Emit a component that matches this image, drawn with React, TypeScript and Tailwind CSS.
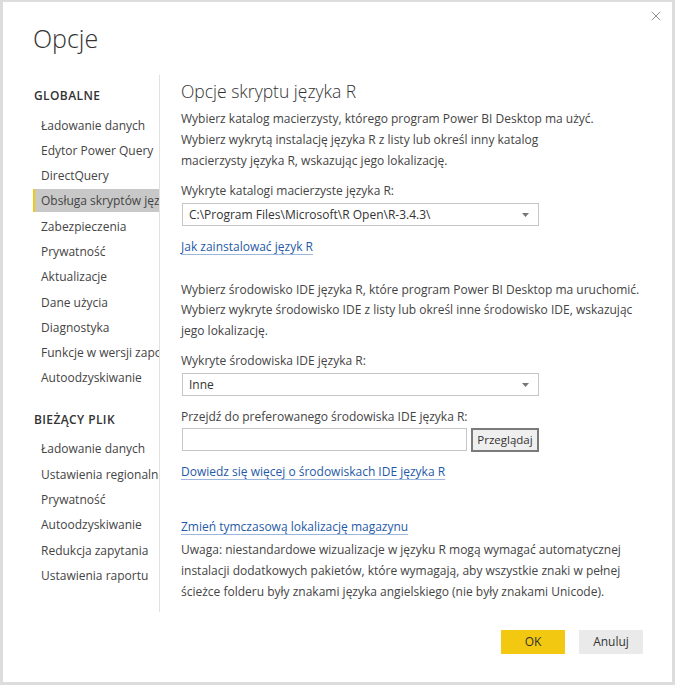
import { X } from 'lucide-react';

const font = { fontFamily: '"Open Sans", "Noto Sans", sans-serif' };

const globalItems = [
  'Ładowanie danych',
  'Edytor Power Query',
  'DirectQuery',
  'Obsługa skryptów języka R',
  'Zabezpieczenia',
  'Prywatność',
  'Aktualizacje',
  'Dane użycia',
  'Diagnostyka',
  'Funkcje w wersji zapoznawczej',
  'Autoodzyskiwanie',
];

const fileItems = [
  'Ładowanie danych',
  'Ustawienia regionalne',
  'Prywatność',
  'Autoodzyskiwanie',
  'Redukcja zapytania',
  'Ustawienia raportu',
];

function NavItem({ label, active }: { label: string; active?: boolean }) {
  return (
    <div
      className={
        active
          ? 'h-[23px] overflow-hidden whitespace-nowrap border-l-2 border-[#f2c811] bg-[#c8c8c8] pl-[6px] leading-[23px] text-[#444]'
          : 'h-[23px] overflow-hidden whitespace-nowrap pl-[8px] leading-[23px] text-[#444]'
      }
    >
      {label}
    </div>
  );
}

function Select({ value }: { value: string }) {
  return (
    <div className="flex h-[23px] w-[357px] items-center justify-between border border-[#c6c6c6] bg-white pl-[6px] pr-[9px] text-[#333]">
      <span>{value}</span>
      <svg width="7" height="4" viewBox="0 0 7 4">
        <path d="M0 0h7L3.5 4z" fill="#777" />
      </svg>
    </div>
  );
}

function Link({ children }: { children: string }) {
  return (
    <div className="leading-[21px]">
      <span className="text-[#1f5aa6] underline decoration-[#9db7dc] underline-offset-[3px]">{children}</span>
    </div>
  );
}

export default function App() {
  return (
    <div className="h-[685px] w-[675px] bg-[#dcdcdc] p-[3px] pt-[2px]" style={font}>
      <div className="relative flex h-[680px] w-[669px] flex-col bg-white text-[12px]">
        <button className="absolute right-[8px] top-[6px] text-[#777]">
          <X size={16} strokeWidth={1.2} />
        </button>

        <h1 className="ml-[30px] mt-[18px] text-[25px] font-light leading-[36px] text-[#333]">Opcje</h1>

        <div className="ml-[30px] mt-[19px] flex h-[537px]">
          <nav className="w-[127px] shrink-0 border-r border-[#e1e1e1]">
            <div className="mt-[11px] pl-[1px] text-[12px] font-semibold leading-[20px] tracking-[0.4px] text-[#333]">GLOBALNE</div>
            <div className="mt-[7.5px] flex flex-col gap-[2.3px]">
              {globalItems.map((item) => (
                <NavItem key={item} label={item} active={item === 'Obsługa skryptów języka R'} />
              ))}
            </div>
            <div className="mt-[20.5px] pl-[1px] text-[12px] font-semibold leading-[20px] tracking-[0.4px] text-[#333]">BIEŻĄCY PLIK</div>
            <div className="mt-[7.5px] flex flex-col gap-[2.3px]">
              {fileItems.map((item) => (
                <NavItem key={item} label={item} />
              ))}
            </div>
          </nav>

          <section className="flex-1 whitespace-nowrap pl-[21px] pt-[3px] text-[#444]">
            <h2 className="text-[17.5px] font-light leading-[26px] text-[#333]">Opcje skryptu języka R</h2>
            <p className="mt-[3.5px] leading-[21px]">
              Wybierz katalog macierzysty, którego program Power BI Desktop ma użyć.
              <br />
              Wybierz wykrytą instalację języka R z listy lub określ inny katalog
              <br />
              macierzysty języka R, wskazując jego lokalizację.
            </p>

            <div className="mt-[9px] leading-[21px]">Wykryte katalogi macierzyste języka R:</div>
            <div className="mt-[2.5px] ml-px">
              <Select value="C:\Program Files\Microsoft\R Open\R-3.4.3\" />
            </div>
            <div className="mt-[9.5px]">
              <Link>Jak zainstalować język R</Link>
            </div>

            <p className="mt-[23px] leading-[20.5px]">
              Wybierz środowisko IDE języka R, które program Power BI Desktop ma uruchomić.
              <br />
              Wybierz wykryte środowisko IDE z listy lub określ inne środowisko IDE, wskazując
              <br />
              jego lokalizację.
            </p>

            <div className="mt-[9px] leading-[21px]">Wykryte środowiska IDE języka R:</div>
            <div className="mt-[2px] ml-px">
              <Select value="Inne" />
            </div>

            <div className="mt-[9.5px] leading-[21px]">Przejdź do preferowanego środowiska IDE języka R:</div>
            <div className="mt-[1.5px] ml-px flex gap-[4px]">
              <div className="h-[23px] w-[285px] border border-[#c6c6c6] bg-white" />
              <button className="h-[24px] w-[68px] border-2 border-[#7a7a7a] bg-[#efefef] text-[11.5px] text-[#333]">Przeglądaj</button>
            </div>
            <div className="mt-[8.5px]">
              <Link>Dowiedz się więcej o środowiskach IDE języka R</Link>
            </div>

            <div className="mt-[34px]">
              <Link>Zmień tymczasową lokalizację magazynu</Link>
            </div>
            <p className="mt-[2px] leading-[21px]">
              Uwaga: niestandardowe wizualizacje w języku R mogą wymagać automatycznej
              <br />
              instalacji dodatkowych pakietów, które wymagają, aby wszystkie znaki w pełnej
              <br />
              ścieżce folderu były znakami języka angielskiego (nie były znakami Unicode).
            </p>
          </section>
        </div>

        <div className="mr-[29px] mt-[18px] flex justify-end gap-[14px]">
          <button className="h-[24px] w-[64px] bg-[#f2c811] text-[12px] text-[#333]">OK</button>
          <button className="h-[24px] w-[64px] bg-[#eaeaea] text-[12px] text-[#333]">Anuluj</button>
        </div>
      </div>
    </div>
  );
}
